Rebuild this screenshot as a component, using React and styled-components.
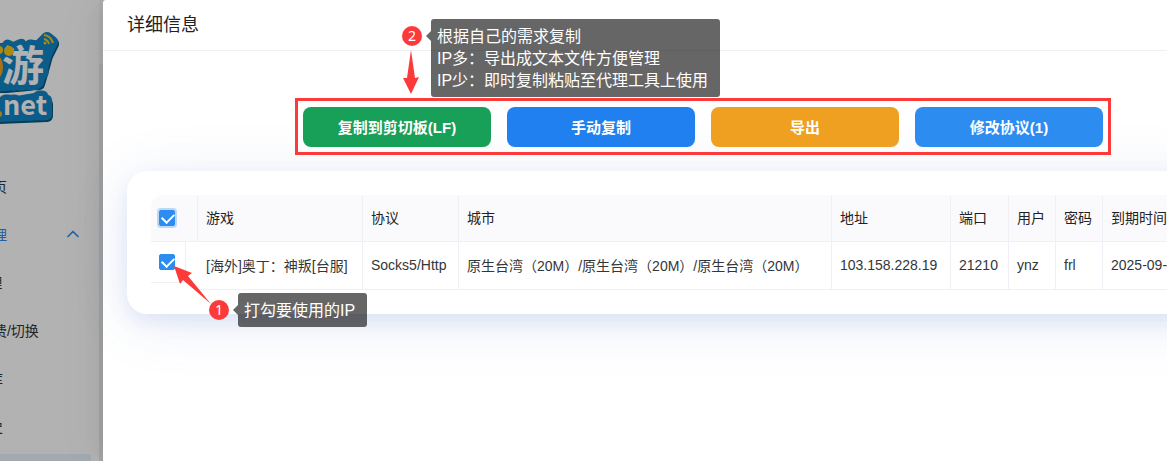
import React, { useState } from "react";
import styled, { createGlobalStyle } from "styled-components";
import { ChevronUp } from "lucide-react";

const GlobalStyle = createGlobalStyle`
  * {
    box-sizing: border-box;
  }
  body {
    margin: 0;
    overflow: hidden;
    font-family: "Liberation Sans", "Noto Sans CJK SC", sans-serif;
    font-size: 14px;
    color: #333639;
    background-color: #fff;
  }
`;

const Page = styled.div`
  position: relative;
  display: flex;
  height: 100vh;
  overflow: hidden;
`;

const Sidebar = styled.aside`
  flex: 0 0 99px;
  overflow: hidden;
  background-color: #fff;
`;

const Logo = styled.svg`
  display: block;
  width: 80px;
  height: 160px;
`;

const Menu = styled.nav`
  width: 240px;
  margin-left: -149px;
`;

const MenuItem = styled.a`
  display: flex;
  align-items: center;
  justify-content: space-between;
  height: 42px;
  margin-top: 6px;
  padding: 0 8px 2px;
  padding-left: ${(props) => (props.$sub ? "110px" : "128px")};
  border-radius: 3px;
  white-space: nowrap;
  text-decoration: none;
  color: ${(props) => (props.$open ? "#2d8cf0" : "#333639")};
  background-color: ${(props) => (props.$active ? "#e9f2fd" : "transparent")};
`;

const Main = styled.main`
  flex: 0 0 4px;
  background-color: #ececec;
`;

const MainHeader = styled.div`
  height: 64px;
  background-color: #f6f6f6;
`;

const Mask = styled.div`
  position: absolute;
  inset: 0;
  background-color: rgba(0, 0, 0, 0.3);
`;

const Drawer = styled.section`
  position: relative;
  flex: 0 0 1200px;
  border-radius: 3px 0 0 0;
  background-color: #fff;
  box-shadow: -6px 0 16px -9px rgba(0, 0, 0, 0.08),
    -9px 0 28px 0 rgba(0, 0, 0, 0.03), -12px 0 48px 16px rgba(0, 0, 0, 0.01);
`;

const DrawerHeader = styled.header`
  display: flex;
  align-items: center;
  height: 51px;
  padding: 0 24px 4px;
  border-bottom: 1px solid #efeff5;
`;

const Title = styled.h1`
  margin: 0;
  font-size: 18px;
  font-weight: 400;
  color: #1f2225;
`;

const DrawerBody = styled.div`
  display: flex;
  flex-direction: column;
  gap: 16px;
  padding: 47px 24px 24px;
`;

const Actions = styled.div`
  position: relative;
  z-index: 1;
  align-self: center;
  display: flex;
  gap: 16px;
  padding: 6px 5px 5px;
  border: 3px solid #fd3a3a;
`;

const ActionButton = styled.button`
  width: 188px;
  height: 40px;
  padding: 0 0 2px;
  border: 0;
  border-radius: 8px;
  font-family: inherit;
  font-size: 15px;
  font-weight: bold;
  color: #fff;
  background-color: ${(props) => props.$color};
  &:hover {
    cursor: pointer;
  }
`;

const Card = styled.div`
  padding: 24px;
  border-radius: 20px;
  background-color: #fff;
  box-shadow: 0 8px 20px rgba(70, 110, 200, 0.12),
    0 8px 60px rgba(70, 110, 200, 0.12);
`;

const Table = styled.table`
  width: 100%;
  table-layout: fixed;
  border-collapse: separate;
  border-spacing: 0;
`;

const Th = styled.th`
  height: 47px;
  padding: 0 8px 2px;
  border-right: 1px solid #efeff5;
  border-bottom: 1px solid #efeff5;
  font-weight: 400;
  text-align: left;
  color: #1f2225;
  background-color: #fafafc;
  &:first-child {
    padding-bottom: 0;
    border-top-left-radius: 12px;
  }
`;

const Td = styled.td`
  height: 48px;
  padding: 0 8px 2px;
  border-right: 1px solid #efeff5;
  border-bottom: 1px solid #efeff5;
  white-space: nowrap;
`;

const CheckTd = styled.td`
  padding: 0;
  vertical-align: top;
`;

const CheckBox = styled.div`
  width: 35px;
  height: 41px;
  padding: 12px 8px;
  border-right: 1px solid #efeff5;
  border-bottom: 1px solid #efeff5;
`;

const Checkbox = styled.input`
  appearance: none;
  display: block;
  width: 16px;
  height: 16px;
  margin: 0;
  border: 1px solid #e0e0e6;
  border-radius: 2px;
  background-color: #fff;
  box-shadow: ${(props) =>
    props.$focused ? "0 0 0 2px rgba(45, 140, 240, 0.3)" : "none"};
  &:checked {
    border-color: #2d8cf0;
    background-color: #2d8cf0;
  }
  &:checked::before {
    content: "";
    display: block;
    width: 10px;
    height: 6px;
    margin: 3px 2px;
    border-left: 2px solid #fff;
    border-bottom: 2px solid #fff;
    transform: translateY(-1px) rotate(-45deg);
  }
`;

const Note = styled.div`
  position: absolute;
  z-index: 2;
  left: ${(props) => props.$x}px;
  top: ${(props) => props.$y}px;
  display: flex;
  gap: 9px;
`;

const Badge = styled.span`
  width: 20px;
  height: 20px;
  margin-top: 7px;
  border-radius: 50%;
  font-family: "Noto Sans", sans-serif;
  line-height: 20px;
  text-align: center;
  color: #fff;
  background-color: #fd3a3a;
`;

const Bubble = styled.p`
  position: relative;
  margin: 0;
  padding: 7px 12px 5px 6px;
  border-radius: 3px;
  font-size: 16px;
  line-height: 22px;
  white-space: pre;
  color: #fff;
  background-color: rgba(0, 0, 0, 0.6);
  &::before {
    content: "";
    position: absolute;
    left: -5px;
    top: 12px;
    border: 5px solid transparent;
    border-left-width: 0;
    border-right-color: rgba(0, 0, 0, 0.6);
  }
`;

const Arrow = styled.svg`
  position: absolute;
  z-index: 2;
  left: ${(props) => props.$x}px;
  top: ${(props) => props.$y}px;
  fill: #fd3a3a;
`;

const LogoShape = styled.g`
  fill: #1284c4;
  stroke: #1284c4;
  stroke-width: 12px;
  stroke-linejoin: round;
  stroke-linecap: round;
  filter: drop-shadow(1px 2px 0 #0b5582);
`;

const LogoText = styled.text`
  font-family: "Noto Sans CJK SC", sans-serif;
  font-weight: bold;
  fill: #fff;
  stroke: #1284c4;
  stroke-width: 11px;
  stroke-linejoin: round;
  paint-order: stroke;
`;

const menu = [
  { label: "首页" },
  { label: "管理", open: true },
  { label: "IP管理", sub: true },
  { label: "购/续费/切换", sub: true },
  { label: "共享库", sub: true },
  { label: "使用史", sub: true },
  { label: "", sub: true, active: true },
];

const buttons = [
  { label: "复制到剪切板(LF)", color: "#18a058" },
  { label: "手动复制", color: "#2080f0" },
  { label: "导出", color: "#f0a020" },
  { label: "修改协议(1)", color: "#2d8cf0" },
];

const columns = [
  { title: "游戏", key: "game", width: 165 },
  { title: "协议", key: "protocol", width: 96 },
  { title: "城市", key: "city", width: 373 },
  { title: "地址", key: "address", width: 119 },
  { title: "端口", key: "port", width: 58 },
  { title: "用户", key: "user", width: 47 },
  { title: "密码", key: "password", width: 47 },
  { title: "到期时间", key: "expire", width: 152 },
];

const rows = [
  {
    game: "[海外]奥丁：神叛[台服]",
    protocol: "Socks5/Http",
    city: "原生台湾（20M）/原生台湾（20M）/原生台湾（20M）",
    address: "103.158.228.19",
    port: "21210",
    user: "ynz",
    password: "frl",
    expire: "2025-09-",
  },
];

const SiteLogo = () => (
  <Logo viewBox="0 0 80 160" aria-label="logo">
    <LogoShape>
      <path d="M-5 49H8L18 48 36 49 47 38 52 42 46 54 41 72 38 82-5 86z" />
      <path d="M-5 103 14 100 40 98 46 102 46 114-5 116z" />
    </LogoShape>
    <LogoText x="2" y="81" fontSize="42">游</LogoText>
    <path d="M-2 93Q16 94 36 90L34 93Q16 97-2 97z" fill="#fff" />
    <LogoText x="3" y="115" fontSize="27">net</LogoText>
    <ellipse cx="-4" cy="67" rx="7" ry="12" fill="#f6a21c" />
    <circle cx="-1" cy="50" r="4" fill="#f8c51e" />
    <circle cx="9" cy="51" r="5" fill="#f8c51e" />
    <circle cx="-1" cy="114" r="3" fill="#f8b01e" />
    <path
      d="M44 35q7 1 9 8M44 39q4 1 5 5"
      fill="none"
      stroke="#f8c51e"
      strokeWidth="2"
    />
    <circle cx="45" cy="43" r="1.5" fill="#f8c51e" />
  </Logo>
);

export default () => {
  const [checked, setChecked] = useState(true);
  const toggle = () => setChecked(!checked);

  return (
    <Page>
      <GlobalStyle />
      <Sidebar>
        <SiteLogo />
        <Menu>
          {menu.map((item, index) => (
            <MenuItem
              key={index}
              href="#"
              $sub={item.sub}
              $open={item.open}
              $active={item.active}
            >
              {item.label}
              {item.open && <ChevronUp size={20} />}
            </MenuItem>
          ))}
        </Menu>
      </Sidebar>
      <Main>
        <MainHeader />
      </Main>
      <Mask />

      <Drawer>
        <DrawerHeader>
          <Title>详细信息</Title>
        </DrawerHeader>
        <DrawerBody>
          <Actions>
            {buttons.map((item) => (
              <ActionButton key={item.label} $color={item.color}>
                {item.label}
              </ActionButton>
            ))}
          </Actions>
          <Card>
            <Table>
              <colgroup>
                <col width="47" />
                {columns.map((col) => (
                  <col key={col.key} width={col.width} />
                ))}
              </colgroup>
              <thead>
                <tr>
                  <Th>
                    <Checkbox
                      type="checkbox"
                      aria-label="全选"
                      $focused
                      checked={checked}
                      onChange={toggle}
                    />
                  </Th>
                  {columns.map((col) => (
                    <Th key={col.key}>{col.title}</Th>
                  ))}
                </tr>
              </thead>
              <tbody>
                {rows.map((row) => (
                  <tr key={row.address}>
                    <CheckTd>
                      <CheckBox>
                        <Checkbox
                          type="checkbox"
                          aria-label={row.game}
                          checked={checked}
                          onChange={toggle}
                        />
                      </CheckBox>
                    </CheckTd>
                    {columns.map((col) => (
                      <Td key={col.key}>{row[col.key]}</Td>
                    ))}
                  </tr>
                ))}
              </tbody>
            </Table>
          </Card>
        </DrawerBody>

        <Note $x={299} $y={19}>
          <Badge>2</Badge>
          <Bubble>
            {"根据自己的需求复制\nIP多：导出成文本文件方便管理\nIP少：即时复制粘贴至代理工具上使用"}
          </Bubble>
        </Note>
        <Arrow $x={300} $y={50} width="16" height="44">
          <path d="M8 0 12 28 16 27 8 44 0 28 4 28z" />
        </Arrow>
        <Note $x={106} $y={293}>
          <Badge>1</Badge>
          <Bubble>打勾要使用的IP</Bubble>
        </Note>
        <Arrow $x={71} $y={266} width="37" height="38">
          <path d="M0 0 18 7 14 10 37 38 9 14 6 18z" />
        </Arrow>
      </Drawer>
    </Page>
  );
};
